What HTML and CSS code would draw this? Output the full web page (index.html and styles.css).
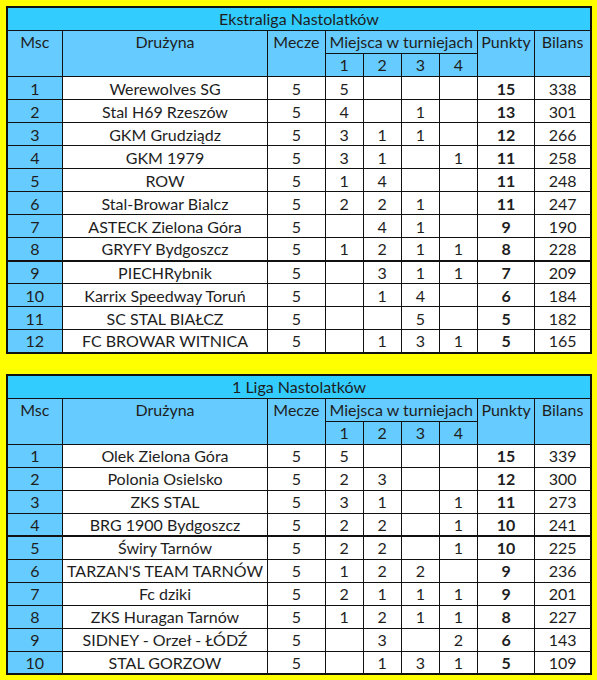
FILE: index.html
```html
<!DOCTYPE html>
<html lang="pl">

<head>
    <meta charset="UTF-8" />
    <meta name="viewport" content="width=device-width, initial-scale=1.0" />
    <title>Liga Nastolatków</title>
    <link rel="stylesheet" href="styles.css">
</head>

<body>
    <main class="tabele">
        <table class="liga">
            <colgroup>
                <col class="c-msc"><col class="c-druzyna"><col class="c-mecze">
                <col class="c-m"><col class="c-m"><col class="c-m"><col class="c-m">
                <col class="c-pkt"><col class="c-bilans">
            </colgroup>
            <thead>
                <tr><th class="tytul" colspan="9">Ekstraliga Nastolatków</th></tr>
                <tr>
                    <th rowspan="2">Msc</th>
                    <th rowspan="2">Drużyna</th>
                    <th rowspan="2">Mecze</th>
                    <th colspan="4">Miejsca w turniejach</th>
                    <th rowspan="2">Punkty</th>
                    <th rowspan="2">Bilans</th>
                </tr>
                <tr class="sub"><th>1</th><th>2</th><th>3</th><th>4</th></tr>
            </thead>
            <tbody>
                <tr><td class="msc">1</td><td>Werewolves SG</td><td>5</td><td>5</td><td></td><td></td><td></td><td class="pkt">15</td><td>338</td></tr>
                <tr><td class="msc">2</td><td>Stal H69 Rzeszów</td><td>5</td><td>4</td><td></td><td>1</td><td></td><td class="pkt">13</td><td>301</td></tr>
                <tr><td class="msc">3</td><td>GKM Grudziądz</td><td>5</td><td>3</td><td>1</td><td>1</td><td></td><td class="pkt">12</td><td>266</td></tr>
                <tr><td class="msc">4</td><td>GKM 1979</td><td>5</td><td>3</td><td>1</td><td></td><td>1</td><td class="pkt">11</td><td>258</td></tr>
                <tr><td class="msc">5</td><td>ROW</td><td>5</td><td>1</td><td>4</td><td></td><td></td><td class="pkt">11</td><td>248</td></tr>
                <tr><td class="msc">6</td><td>Stal-Browar Bialcz</td><td>5</td><td>2</td><td>2</td><td>1</td><td></td><td class="pkt">11</td><td>247</td></tr>
                <tr><td class="msc">7</td><td>ASTECK Zielona Góra</td><td>5</td><td></td><td>4</td><td>1</td><td></td><td class="pkt">9</td><td>190</td></tr>
                <tr><td class="msc">8</td><td>GRYFY Bydgoszcz</td><td>5</td><td>1</td><td>2</td><td>1</td><td>1</td><td class="pkt">8</td><td>228</td></tr>
                <tr class="granica"><td class="msc">9</td><td>PIECHRybnik</td><td>5</td><td></td><td>3</td><td>1</td><td>1</td><td class="pkt">7</td><td>209</td></tr>
                <tr><td class="msc">10</td><td>Karrix Speedway Toruń</td><td>5</td><td></td><td>1</td><td>4</td><td></td><td class="pkt">6</td><td>184</td></tr>
                <tr><td class="msc">11</td><td>SC STAL BIAŁCZ</td><td>5</td><td></td><td></td><td>5</td><td></td><td class="pkt">5</td><td>182</td></tr>
                <tr><td class="msc">12</td><td>FC BROWAR WITNICA</td><td>5</td><td></td><td>1</td><td>3</td><td>1</td><td class="pkt">5</td><td>165</td></tr>
            </tbody>
        </table>

        <table class="liga">
            <colgroup>
                <col class="c-msc"><col class="c-druzyna"><col class="c-mecze">
                <col class="c-m"><col class="c-m"><col class="c-m"><col class="c-m">
                <col class="c-pkt"><col class="c-bilans">
            </colgroup>
            <thead>
                <tr><th class="tytul" colspan="9">1 Liga Nastolatków</th></tr>
                <tr>
                    <th rowspan="2">Msc</th>
                    <th rowspan="2">Drużyna</th>
                    <th rowspan="2">Mecze</th>
                    <th colspan="4">Miejsca w turniejach</th>
                    <th rowspan="2">Punkty</th>
                    <th rowspan="2">Bilans</th>
                </tr>
                <tr class="sub"><th>1</th><th>2</th><th>3</th><th>4</th></tr>
            </thead>
            <tbody>
                <tr><td class="msc">1</td><td>Olek Zielona Góra</td><td>5</td><td>5</td><td></td><td></td><td></td><td class="pkt">15</td><td>339</td></tr>
                <tr><td class="msc">2</td><td>Polonia Osielsko</td><td>5</td><td>2</td><td>3</td><td></td><td></td><td class="pkt">12</td><td>300</td></tr>
                <tr><td class="msc">3</td><td>ZKS STAL</td><td>5</td><td>3</td><td>1</td><td></td><td>1</td><td class="pkt">11</td><td>273</td></tr>
                <tr><td class="msc">4</td><td>BRG 1900 Bydgoszcz</td><td>5</td><td>2</td><td>2</td><td></td><td>1</td><td class="pkt">10</td><td>241</td></tr>
                <tr class="granica"><td class="msc">5</td><td>Świry Tarnów</td><td>5</td><td>2</td><td>2</td><td></td><td>1</td><td class="pkt">10</td><td>225</td></tr>
                <tr><td class="msc">6</td><td>TARZAN'S TEAM TARNÓW</td><td>5</td><td>1</td><td>2</td><td>2</td><td></td><td class="pkt">9</td><td>236</td></tr>
                <tr><td class="msc">7</td><td>Fc dziki</td><td>5</td><td>2</td><td>1</td><td>1</td><td>1</td><td class="pkt">9</td><td>201</td></tr>
                <tr><td class="msc">8</td><td>ZKS Huragan Tarnów</td><td>5</td><td>1</td><td>2</td><td>1</td><td>1</td><td class="pkt">8</td><td>227</td></tr>
                <tr><td class="msc">9</td><td>SIDNEY - Orzeł - ŁÓDŹ</td><td>5</td><td></td><td>3</td><td></td><td>2</td><td class="pkt">6</td><td>143</td></tr>
                <tr><td class="msc">10</td><td>STAL GORZOW</td><td>5</td><td></td><td>1</td><td>3</td><td>1</td><td class="pkt">5</td><td>109</td></tr>
            </tbody>
        </table>
    </main>
</body>

</html>
```

FILE: styles.css
```css
* {
    margin: 0;
    padding: 0;
    box-sizing: border-box;
}

body {
    background-color: #ffff00;
    font-family: Lato, 'Liberation Sans', Arial, sans-serif;
    font-size: 16px;
    color: #1e1e1e;
    padding: 6px;
}

.tabele {
    display: flex;
    flex-direction: column;
    gap: 20px;
}

table.liga {
    width: 586px;
    border-collapse: collapse;
    table-layout: fixed;
    border: 2px solid #111;
}

.c-msc { width: 55px; }
.c-druzyna { width: 205px; }
.c-mecze { width: 57px; }
.c-m { width: 38px; }
.c-pkt { width: 57px; }
.c-bilans { width: 56px; }

.liga th,
.liga td {
    border: 1px solid #111;
    height: 22px;
    padding: 0 2px;
    text-align: center;
    white-space: nowrap;
    font-weight: normal;
}

.liga th {
    background-color: #66ccff;
    vertical-align: top;
    line-height: 22px;
}

.liga th.tytul {
    background-color: #33ccff;
    vertical-align: middle;
}

.liga td {
    height: 23px;
    background-color: #fff;
    vertical-align: middle;
}

.liga td.msc {
    background-color: #66ccff;
}

.liga td.pkt {
    font-weight: bold;
}

.liga tr.granica td {
    border-top: 2px solid #111;
}
```
